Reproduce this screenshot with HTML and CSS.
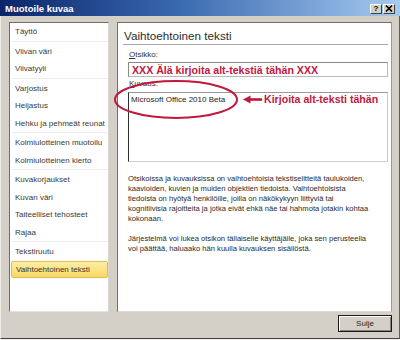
FILE: index.html
```html
<!DOCTYPE html>
<html lang="fi">
<head>
<meta charset="utf-8">
<title>Muotoile kuvaa</title>
<link rel="stylesheet" href="styles.css">
</head>
<body>
<div class="window">
  <div class="titlebar">
    <span class="title">Muotoile kuvaa</span>
    <div class="tb-buttons">
      <span class="tb-btn tb-help">?</span>
      <span class="tb-btn tb-close"><svg width="8" height="7" viewBox="0 0 8 7"><path d="M1 0.5 L7 6.5 M7 0.5 L1 6.5" stroke="#000" stroke-width="1.6" fill="none"/></svg></span>
    </div>
  </div>
  <div class="frame">
    <div class="panes">
      <ul class="nav">
        <li class="item">Täyttö</li>
        <li class="sep"></li>
        <li class="item">Viivan väri</li>
        <li class="item">Viivatyyli</li>
        <li class="sep"></li>
        <li class="item">Varjostus</li>
        <li class="item">Heijastus</li>
        <li class="item">Hehku ja pehmeät reunat</li>
        <li class="sep"></li>
        <li class="item">Kolmiulotteinen muotoilu</li>
        <li class="item">Kolmiulotteinen kierto</li>
        <li class="sep"></li>
        <li class="item">Kuvakorjaukset</li>
        <li class="item">Kuvan väri</li>
        <li class="item">Taiteelliset tehosteet</li>
        <li class="item">Rajaa</li>
        <li class="sep"></li>
        <li class="item">Tekstiruutu</li>
        <li class="item selected">Vaihtoehtoinen teksti</li>
      </ul>
      <div class="content">
        <h1 class="heading">Vaihtoehtoinen teksti</h1>
        <div class="label label-title"><u>O</u>tsikko:</div>
        <div class="input"><span class="red-text">XXX Älä kirjoita alt-tekstiä tähän XXX</span></div>
        <div class="label label-desc"><u>K</u>uvaus:</div>
        <div class="textarea">Microsoft Office 2010 Beta</div>
        <p class="help">Otsikoissa ja kuvauksissa on vaihtoehtoisia tekstiselitteitä taulukoiden,<br>kaavioiden, kuvien ja muiden objektien tiedoista. Vaihtoehtoisista<br>tiedoista on hyötyä henkilöille, joilla on näkökykyyn liittyviä tai<br>kognitiivisia rajoitteita ja jotka eivät ehkä näe tai hahmota jotakin kohtaa<br>kokonaan.</p>
        <p class="help help2">Järjestelmä voi lukea otsikon tällaiselle käyttäjälle, joka sen perusteella<br>voi päättää, haluaako hän kuulla kuvauksen sisällöstä.</p>
      </div>
    </div>
    <div class="footer">
      <button class="btn">Sulje</button>
    </div>
  </div>
  <svg class="annot" width="400" height="340" viewBox="0 0 400 340">
    <ellipse cx="176" cy="99.5" rx="61" ry="18.5" fill="none" stroke="#c0183e" stroke-width="2"/>
    <path d="M243 99.5 L250.5 95.5 L250.5 103.5 Z" fill="#c0183e"/>
    <path d="M249 99.5 L262 99.5" stroke="#c0183e" stroke-width="2.6"/>
  </svg>
  <div class="annot-text">Kirjoita alt-teksti tähän</div>
</div>
</body>
</html>
```

FILE: styles.css
```css
* { box-sizing: border-box; }

html, body {
  margin: 0;
  padding: 0;
  background: #ffffff;
}

body {
  font-family: "Liberation Sans", Arial, sans-serif;
  color: #333;
}

.window {
  position: relative;
  width: 400px;
  height: 340px;
  background: #f2f1ee;
  overflow: hidden;
}

.titlebar {
  height: 16px;
  background: linear-gradient(to right, #0a246a 0%, #3a6ab0 45%, #a6caf0 100%);
  display: flex;
  align-items: center;
  justify-content: space-between;
  padding: 0 5px 0 5px;
}

.title {
  color: #fff;
  font-weight: bold;
  font-size: 9.5px;
  line-height: 10px;
  padding-top: 2px;
}

.tb-buttons {
  display: flex;
  gap: 1px;
  padding-top: 1px;
}

.tb-btn {
  width: 12px;
  height: 10px;
  background: #d4d0c8;
  border: 1px solid;
  border-color: #ffffff #404040 #404040 #ffffff;
  display: flex;
  align-items: center;
  justify-content: center;
  font-size: 8px;
  font-weight: bold;
  line-height: 8px;
  color: #000;
}

.frame {
  height: 323px;
  background: #d4d0c8;
  border-left: 1px solid #ecebe6;
  border-right: 1px solid #606060;
  border-bottom: 1px solid #404040;
  padding: 6px 7px 0 8px;
}

.panes {
  display: grid;
  grid-template-columns: 100px 275px;
  column-gap: 8px;
  height: 290px;
}

.nav {
  list-style: none;
  margin: 0;
  padding: 0;
  background: #fff;
  border: 1px solid;
  border-color: #6e6e6e #d8d6d0 #e6e4de #6e6e6e;
  font-size: 8px;
  color: #3a3a3a;
}

.item {
  height: 17.5px;
  line-height: 17.5px;
  padding-left: 5px;
  white-space: nowrap;
}

.sep {
  height: 2px;
  border-top: 1px solid #ececec;
  margin: 0 0 0 2px;
}

.selected {
  margin: 0 0 0 1px;
  padding-left: 4px;
  border: 1px solid #e2bd55;
  border-radius: 2px;
  line-height: 15.5px;
  background: linear-gradient(#fdeea6, #fbd862);
  color: #333;
}

.content {
  background: #fff;
  border: 1px solid;
  border-color: #6e6e6e #9a9a9a #dcdad4 #6e6e6e;
  padding: 0 3px 0 10px;
}

.heading {
  margin: 0 0 0 -5px;
  padding: 6px 0 1px 1px;
  font-size: 11.7px;
  line-height: 14px;
  font-weight: normal;
  color: #2e2e2e;
  border-bottom: 1px solid #a8a8a8;
}

.label {
  font-size: 8px;
  line-height: 10px;
  color: #333;
  padding-left: 1px;
}

.label-title { margin-top: 5px; }
.label-desc { margin-top: 2px; }

.input {
  margin-top: 2px;
  height: 15px;
  border: 1px solid;
  border-color: #8a8a8a #b8b8b8 #b8b8b8 #8a8a8a;
  padding: 0 0 0 3px;
  display: flex;
  align-items: center;
}

.red-text, .annot-text {
  font-family: "Liberation Sans", Arial, sans-serif;
  font-weight: bold;
  font-size: 10.6px;
  line-height: 12px;
  color: #c0183e;
  white-space: nowrap;
}

.textarea {
  margin-top: 3px;
  height: 70px;
  border: 1px solid;
  border-color: #9a9a9a #c8c8c8 #d0d0d0 #303030;
  padding: 2px 0 0 2px;
  font-size: 8px;
  line-height: 10px;
  color: #222;
}

.help {
  margin: 12px 0 0 0;
  font-size: 7.6px;
  line-height: 10px;
  color: #2a2a2a;
  white-space: nowrap;
}

.help2 { margin-top: 10px; }

.footer {
  display: flex;
  justify-content: flex-end;
  padding-top: 3px;
}

.btn {
  width: 54px;
  height: 17px;
  margin: 0;
  padding: 0;
  font-family: "Liberation Sans", Arial, sans-serif;
  font-size: 8px;
  color: #222;
  background: #d4d0c8;
  border: 1px solid #1a1a1a;
  box-shadow: inset 1px 1px 0 #ffffff, inset -1px -1px 0 #808080;
}

.annot {
  position: absolute;
  left: 0;
  top: 0;
  pointer-events: none;
}

.annot-text {
  position: absolute;
  left: 264px;
  top: 93px;
}
```
